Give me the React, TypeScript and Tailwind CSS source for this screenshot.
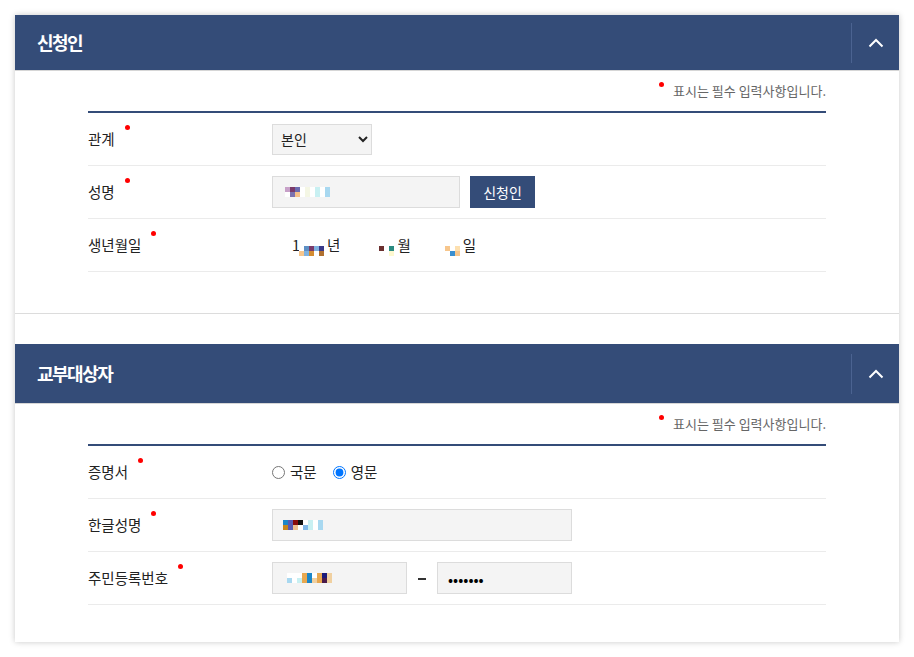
import { ReactNode } from 'react'

const NAVY = 'bg-[#344c78]'

function Dot() {
  return <span className="relative -top-[12px] ml-[10px] inline-block h-[5px] w-[5px] rounded-full bg-[#ff0000]" />
}

// pixelated (masked) personal data
function Pixels({ cols }: { cols: string[][] }) {
  return (
    <span className="inline-flex items-center">
      {cols.map((col, i) => (
        <span key={i} className="flex flex-col">
          {col.map((c, j) => (
            <span key={j} className="block h-[5px] w-[5px]" style={{ backgroundColor: c }} />
          ))}
        </span>
      ))}
    </span>
  )
}

function Header({ title, tall }: { title: string; tall?: boolean }) {
  return (
    <div className={`${NAVY} flex items-center justify-between ${tall ? 'h-[60px]' : 'h-[56px]'} border-b border-[#d6d6d6]`}>
      <h2 className="pl-[22px] text-[18px] font-bold tracking-[-1.5px] text-white">{title}</h2>
      <div className="flex h-full items-center">
        <span className="block h-[40px] w-px bg-[#4b6391]" />
        <button className="flex h-full w-[47px] items-center justify-center">
          <svg width="16" height="10" viewBox="0 0 16 10" fill="none" stroke="#fff" strokeWidth="2">
            <path d="M1.5 8.5L8 2l6.5 6.5" />
          </svg>
        </button>
      </div>
    </div>
  )
}

function Note() {
  return (
    <div className="flex h-[40px] items-center justify-end text-[13px] text-[#666]">
      <span className="relative -top-[7px] mr-[9px] inline-block h-[5px] w-[5px] rounded-full bg-[#ff0000]" />
      표시는 필수 입력사항입니다.
    </div>
  )
}

function Row({ label, children }: { label: string; children: ReactNode }) {
  return (
    <div className="flex h-[53px] items-center border-b border-[#ebebeb]">
      <div className="flex w-[184px] items-center text-[14.5px] text-[#222]">
        <span>{label}</span>
        <Dot />
      </div>
      <div className="flex items-center">{children}</div>
    </div>
  )
}

const fieldBox = 'flex h-[32px] items-center border border-[#dcdcdc] bg-[#f4f4f4] px-[12px]'

export default function App() {
  return (
    <div className="min-h-screen bg-white p-[15px] font-['Noto_Sans_CJK_KR','Noto_Sans',sans-serif]">
      <div className="w-[884px] bg-white shadow-[0_0_6px_rgba(0,0,0,0.22)]">
        <section className="border-b border-[#dcdcdc]">
          <Header title="신청인" />
          <div className="px-[73px] pb-[41px]">
            <Note />
            <div className="border-t-2 border-[#344c78]">
              <Row label="관계">
                <select
                  defaultValue="본인"
                  className="h-[31px] w-[100px] border border-[#dcdcdc] bg-[#f4f4f4] pl-[4px] text-[14px] text-[#222]"
                >
                  <option>본인</option>
                  <option>대리인</option>
                </select>
              </Row>
              <Row label="성명">
                <div className={`${fieldBox} w-[188px]`}>
                  <Pixels
                    cols={[
                      ['#c7a0c8', '#fff'],
                      ['#7a3a6a', '#7b72b0'],
                      ['#6b6bb0', '#f5c08a'],
                      ['#fff', '#fff'],
                      ['#f4f6e4', '#f4f6e4'],
                      ['#fff', '#fff'],
                      ['#c8f0f2', '#c8f0f2'],
                      ['#fff', '#fff'],
                      ['#a8d8f0', '#a8d8f0'],
                    ]}
                  />
                </div>
                <button className={`${NAVY} ml-[10px] h-[32px] w-[65px] text-[14px] text-white`}>신청인</button>
              </Row>
              <Row label="생년월일">
                <div className="flex items-center text-[14.5px] text-[#222]">
                  <span className="ml-[20px]">1</span>
                  <span className="-ml-[1px]">
                    <Pixels
                      cols={[
                        ['#fff', '#f7c68c'],
                        ['#5d8fc4', '#7fb2e0'],
                        ['#7a3a6a', '#d48c30'],
                        ['#7fb2e0', '#fff'],
                        ['#3a3a8a', '#b07030'],
                      ]}
                    />
                  </span>
                  <span className="ml-[3px]">년</span>
                  <span className="ml-[39px]">
                    <Pixels cols={[['#6b2f2f', '#fff'], ['#fff', '#fff'], ['#2a8a80', '#fdf8d0']]} />
                  </span>
                  <span className="ml-[3px]">월</span>
                  <span className="ml-[34px]">
                    <Pixels
                      cols={[
                        ['#f7c68c', '#fff'],
                        ['#fff', '#3a8fd0'],
                        ['#fde0b0', '#f7c68c'],
                      ]}
                    />
                  </span>
                  <span className="ml-[3px]">일</span>
                </div>
              </Row>
            </div>
          </div>
        </section>

        <div className="h-[30px]" />

        <section>
          <Header title="교부대상자" tall />
          <div className="px-[73px] pb-[37px]">
            <Note />
            <div className="border-t-2 border-[#344c78]">
              <Row label="증명서">
                <label className="flex items-center text-[14.5px] text-[#222]">
                  <input type="radio" name="cert" className="h-[13px] w-[13px]" />
                  <span className="ml-[5px]">국문</span>
                </label>
                <label className="ml-[16px] flex items-center text-[14.5px] text-[#222]">
                  <input type="radio" name="cert" defaultChecked className="h-[13px] w-[13px]" />
                  <span className="ml-[5px]">영문</span>
                </label>
              </Row>
              <Row label="한글성명">
                <div className={`${fieldBox} w-[300px] pl-[10px]`}>
                  <Pixels
                    cols={[
                      ['#1b86c8', '#c8861b'],
                      ['#5a5ab0', '#5a5ab0'],
                      ['#8a0a0a', '#f0c090'],
                      ['#111', '#fff'],
                      ['#fff', '#7fb8e8'],
                      ['#c8f0f2', '#c8f0f2'],
                      ['#fff', '#fff'],
                      ['#a8d8f0', '#a8d8f0'],
                    ]}
                  />
                </div>
              </Row>
              <Row label="주민등록번호">
                <div className={`${fieldBox} w-[135px] pl-[14px]`}>
                  <Pixels
                    cols={[
                      ['#fff', '#a8d8f0'],
                      ['#fff', '#fff'],
                      ['#fff', '#c8f0f2'],
                      ['#e8a850', '#e8a850'],
                      ['#1b86c8', '#1b86c8'],
                      ['#fff', '#f0d0a0'],
                      ['#e8a850', '#e8a850'],
                      ['#1a1a7a', '#4a1a4a'],
                      ['#f0d0a0', '#f0d0a0'],
                    ]}
                  />
                </div>
                <span className="mx-[11px] mt-[2px] block h-[2px] w-[8px] bg-[#333]" />
                <input
                  type="password"
                  readOnly
                  value="1234567"
                  className="h-[32px] w-[135px] border border-[#dcdcdc] bg-[#f4f4f4] px-[10px] text-[15px] text-black"
                />
              </Row>
            </div>
          </div>
        </section>
      </div>
    </div>
  )
}
